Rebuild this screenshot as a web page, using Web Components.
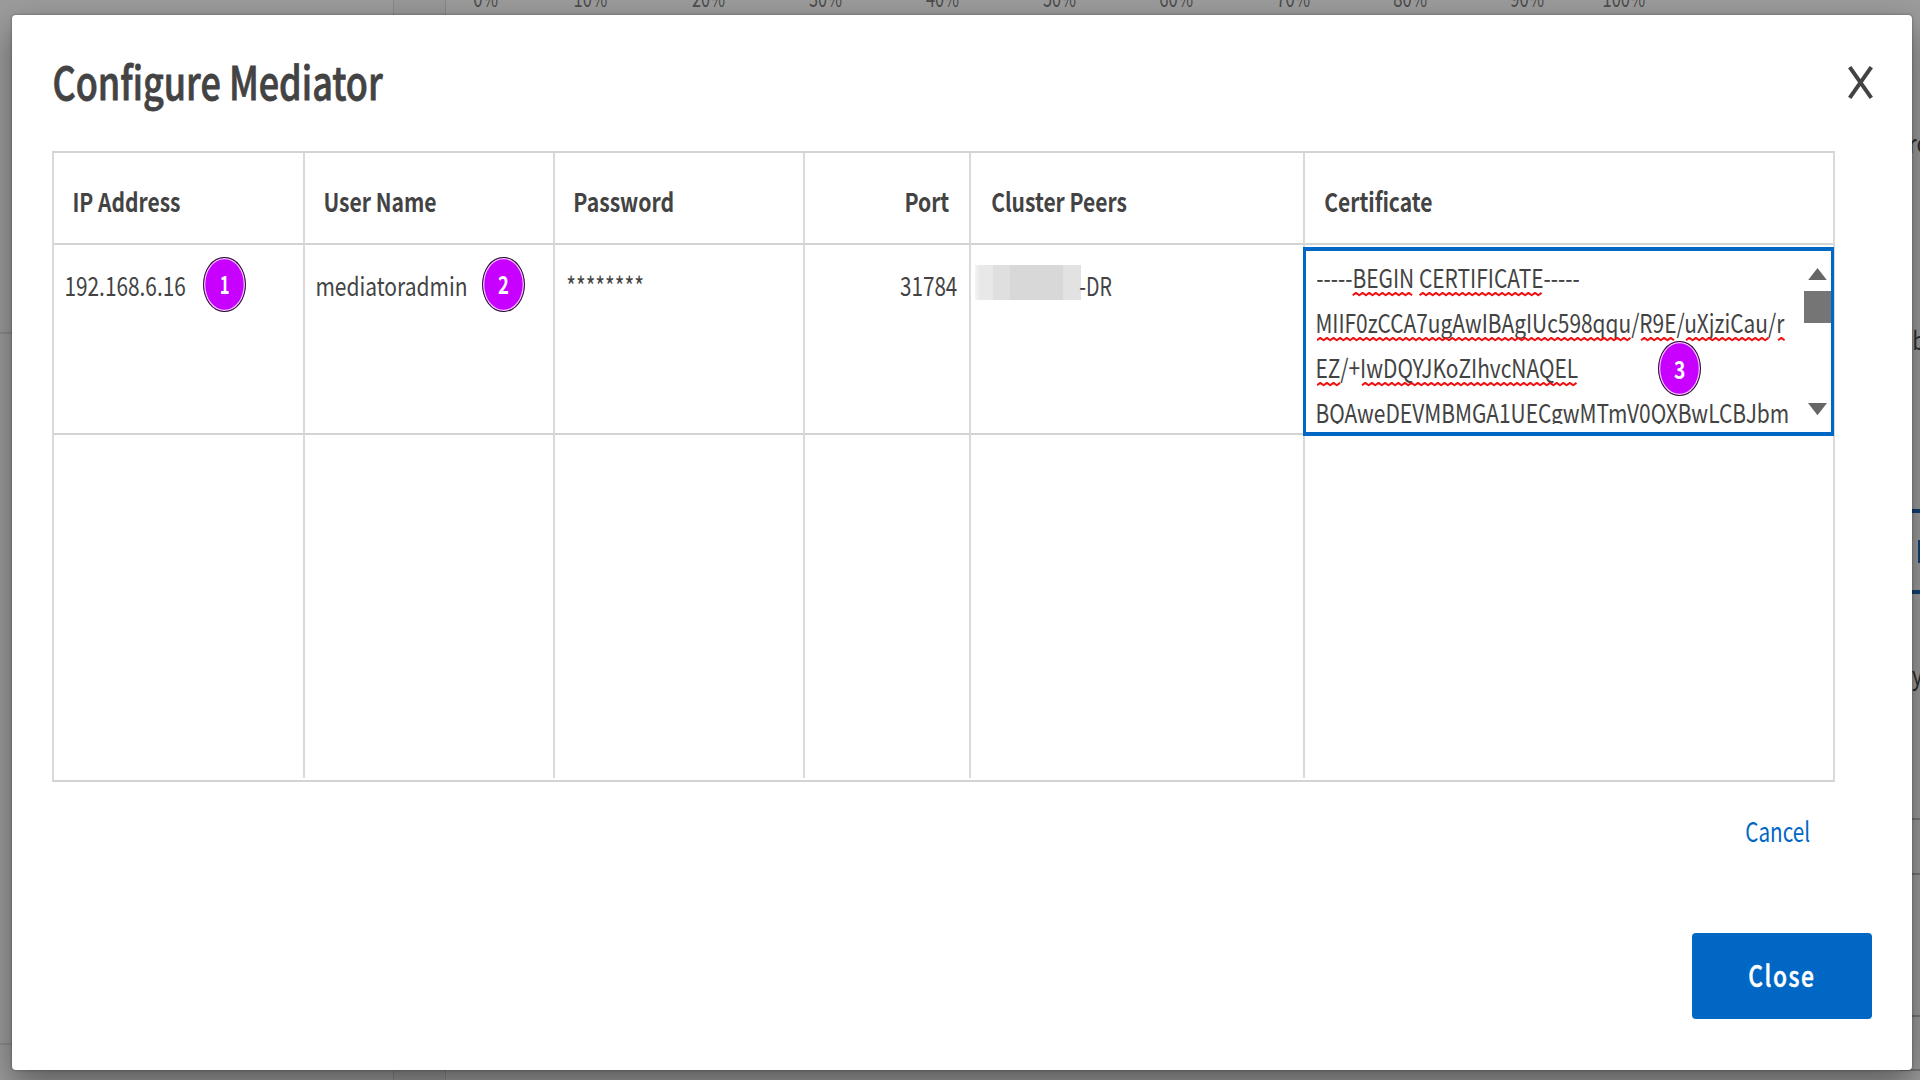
<!DOCTYPE html>
<html lang="en">
<head>
<meta charset="utf-8">
<title>Configure Mediator</title>
<style>
html,body{margin:0;height:100%;overflow:hidden}
body{background:#9c9c9c;font-family:"Noto Sans CJK SC","Noto Sans",sans-serif;color:#434343}
</style>
</head>
<body>
<mediator-page></mediator-page>
<script>
const FONT = '"Noto Sans CJK SC","Noto Sans",sans-serif';
const measure = document.createElement('canvas').getContext('2d');

/* Condensed label: its text is narrowed to the width in the "w" attribute.
   "line" is the line height, "bold" adds a thin stroke for in-between weights. */
class FitText extends HTMLElement {
  connectedCallback() {
    if (this.shadowRoot) return;
    const w = +this.getAttribute('w'), size = +(this.getAttribute('size') || 26);
    const line = +(this.getAttribute('line') || 45), weight = this.getAttribute('weight') || 400;
    const spacing = +(this.getAttribute('spacing') || 0), bold = +(this.getAttribute('bold') || 0);
    measure.font = `${weight} ${size}px ${FONT}`;
    measure.letterSpacing = spacing + 'px';
    const m = measure.measureText(this.textContent);
    const ink = m.actualBoundingBoxLeft + m.actualBoundingBoxRight;
    const k = w / ink;
    this.attachShadow({mode: 'open'}).innerHTML = `<style>
      :host{display:block;flex:none;width:${w}px;height:${line}px;line-height:${line}px;font-size:${size}px;font-weight:${weight};white-space:nowrap}
      span{display:inline-block;white-space:pre;letter-spacing:${spacing}px;-webkit-text-stroke:${bold}px currentColor;transform-origin:0 0;transform:translateX(${m.actualBoundingBoxLeft * k}px) scaleX(${k})}
    </style><span><slot></slot></span>`;
  }
}

class StepBadge extends HTMLElement {
  connectedCallback() {
    this.attachShadow({mode: 'open'}).innerHTML = `<style>
      :host{display:flex;align-items:center;justify-content:center;position:absolute;z-index:2;box-sizing:border-box;width:42.5px;height:55.5px;border-radius:50%;border:1px solid #2a1230;background:#c800ff;box-shadow:inset 0 0 0 1.3px #f3c9ff;color:#fff}
    </style><fit-text w="${this.getAttribute('w')}" size="24.5" line="56" weight="700">${this.textContent}</fit-text>`;
  }
}

class DataCell extends HTMLElement {
  connectedCallback() {
    this.attachShadow({mode: 'open'}).innerHTML = `<style>
      :host{display:flex;position:relative;box-sizing:border-box;border-right:2px solid #dadada;min-width:0}
      :host([head]){padding:25px 19.8px 0 20.7px;border-bottom:2px solid #d3d3d3}
      :host([body]){padding:16.7px 11.8px 0 12.4px;border-bottom:2px solid #d3d3d3}
      :host([fill]){margin-bottom:2px}
      :host([end]){justify-content:flex-end}
      :host([last]){border-right:0}
    </style><slot></slot>`;
  }
}

class RedactedName extends HTMLElement {
  connectedCallback() {
    this.attachShadow({mode: 'open'}).innerHTML = `<style>
      :host{display:flex;flex:none;width:106px;height:35.3px}
      i{flex:none}
    </style><i style="width:18px;background:linear-gradient(90deg,#f4f4f4,#e8e8e8 5px)"></i><i style="width:17px;background:#dfdfdf"></i><i style="width:53px;background:#d8d8d8"></i><i style="width:18px;background:#e2e2e2"></i>`;
  }
}

class CertField extends HTMLElement {
  connectedCallback() {
    const rows = [
      [47, [[35.7, 97.4], [102.5, 226]]],
      [92, [[0, 314.6], [324, 360.2], [369, 452], [461, 469]]],
      [137, [[0, 24.4], [45, 262]]]
    ];
    let d = '';
    for (const [y, parts] of rows) for (const [a, b] of parts) {
      d += `M${a} ${y + 1.3}`;
      let up = true;
      for (let x = a + 3.3; x < b; x += 3.3, up = !up) d += `L${x.toFixed(1)} ${up ? y - 1.1 : y + 1.3}`;
    }
    this.attachShadow({mode: 'open'}).innerHTML = `<style>
      :host{display:flex;justify-content:space-between;position:absolute;left:-1.5px;top:2px;box-sizing:border-box;width:530.5px;height:189px;border:solid #0067c5;border-width:4px 3px;background:#fff;z-index:1}
      .text{position:relative;margin:3.2px 0 0 10.7px;height:169.8px;overflow:hidden;width:474px}
      svg.waves{position:absolute;left:0;top:-7.4px}
      .bar{display:flex;flex-direction:column;align-items:center;width:27px;height:181px}
      .thumb{width:27px;height:32px;background:#757575;margin:10.3px 0 80.7px}
      .bar svg{margin-top:16.7px;flex:none}.bar svg+.thumb+svg{margin-top:0}
      svg{display:block;flex:none}
    </style>
    <div class="text">
      <fit-text w="262">-----BEGIN CERTIFICATE-----</fit-text>
      <fit-text w="468">MIIF0zCCA7ugAwIBAgIUc598qqu/R9E/uXjziCau/r</fit-text>
      <fit-text w="261">EZ/+IwDQYJKoZIhvcNAQEL</fit-text>
      <fit-text w="470.5">BQAweDEVMBMGA1UECgwMTmV0QXBwLCBJbm</fit-text>
      <svg class="waves" width="474" height="170" fill="none" stroke="#ee1111" stroke-width="2" stroke-linejoin="round"><path d="${d}"/></svg>
    </div>
    <div class="bar">
      <svg width="19" height="12.3" viewBox="0 0 19 12.3"><path d="M9.5 0L19 12.3H0z" fill="#666"/></svg>
      <div class="thumb"></div>
      <svg width="19" height="12.3" viewBox="0 0 19 12.3"><path d="M0 0H19L9.5 12.3z" fill="#666"/></svg>
    </div>`;
  }
}

class MediatorTable extends HTMLElement {
  connectedCallback() {
    this.attachShadow({mode: 'open'}).innerHTML = `<style>
      :host{display:grid;box-sizing:border-box;width:1783.5px;height:630.5px;border:2px solid #d6d6d6;border-color:#d3d3d3 #dadada;grid-template-columns:251px 250px 250px 166.5px 333.5px 1fr;grid-template-rows:92.3px 190px 1fr}
    </style>
    <data-cell head><fit-text w="105.7" weight="700">IP Address</fit-text></data-cell>
    <data-cell head><fit-text w="110.6" weight="700">User Name</fit-text></data-cell>
    <data-cell head><fit-text w="97.7" weight="700">Password</fit-text></data-cell>
    <data-cell head end><fit-text w="43.3" weight="700">Port</fit-text></data-cell>
    <data-cell head><fit-text w="134.2" weight="700">Cluster Peers</fit-text></data-cell>
    <data-cell head last><fit-text w="106.5" weight="700">Certificate</fit-text></data-cell>
    <data-cell body><fit-text w="119.5" style="margin-left:.6px">192.168.6.16</fit-text><step-badge w="7.5" style="left:149.5px;top:11.3px">1</step-badge></data-cell>
    <data-cell body><fit-text w="149">mediatoradmin</fit-text><step-badge w="10.6" style="left:177.8px;top:11.3px">2</step-badge></data-cell>
    <data-cell body><fit-text w="76" style="margin-top:.3px">********</fit-text></data-cell>
    <data-cell body end><fit-text w="57">31784</fit-text></data-cell>
    <data-cell body><redacted-name style="margin:2.8px 0 0 -8px"></redacted-name><fit-text w="31.5" style="margin-left:-1px">-DR</fit-text></data-cell>
    <data-cell body last><cert-field></cert-field><step-badge w="11" style="left:353.5px;top:95.7px">3</step-badge></data-cell>
    <data-cell fill></data-cell><data-cell fill></data-cell><data-cell fill></data-cell><data-cell fill></data-cell><data-cell fill></data-cell><data-cell fill last></data-cell>`;
  }
}

class MediatorDialog extends HTMLElement {
  connectedCallback() {
    this.attachShadow({mode: 'open'}).innerHTML = `<style>
      :host{display:flex;flex-direction:column;position:absolute;left:11.5px;top:15px;box-sizing:border-box;width:1900px;height:1055px;padding:0 40px;background:#fff;border-radius:4px;box-shadow:0 14px 34px rgba(0,0,0,.42),0 0 3px rgba(0,0,0,.35)}
      header{display:flex;justify-content:space-between;height:136px}
      header fit-text{margin:19.5px 0 0 2px}
      header svg{margin:51.2px -1.3px 0 0}
      .cancel{align-self:flex-end;margin:26.8px 62.5px 0 0;color:#0067c5}
      button{all:unset;display:flex;justify-content:center;align-self:flex-end;width:180px;height:86px;margin-top:79.7px;border-radius:4px;background:#0067c5;color:#fff}
      button fit-text{margin-top:-1.8px}
    </style>
    <header><fit-text w="329" size="45.5" line="90" weight="500" bold=".8">Configure Mediator</fit-text>
    <svg width="25" height="33" viewBox="0 0 25 33" fill="none" stroke="#434343" stroke-width="4"><path d="M1.7 1.2L23.3 31.8M23.3 1.2L1.7 31.8"/></svg></header>
    <mediator-table></mediator-table>
    <fit-text class="cancel" w="63.5" size="27">Cancel</fit-text>
    <button><fit-text w="64.5" size="29" line="86" weight="500" spacing="2" bold=".5">Close</fit-text></button>`;
  }
}

class DimmedApp extends HTMLElement {
  connectedCallback() {
    const ticks = [[0, 28, 24], [10, 77, 32], [20, 84.5, 33], [30, 84, 33], [40, 84, 33], [50, 84, 33], [60, 84, 33], [70, 84, 33], [80, 84.5, 33], [90, 84, 33], [100, 59.5, 41]];
    this.attachShadow({mode: 'open'}).innerHTML = `<style>
      :host{display:flex;width:1920px;height:1080px;overflow:hidden;color:#4c4c4c}
      .side{width:393px;border-right:1px solid #878787;display:flex;flex-direction:column}
      .side i{height:331.5px;border-bottom:2px solid #8c8c8c}.side i+i{height:709.5px}
      .gutter{width:51px;border-right:1px solid #878787;background:#989898}
      .main{display:flex;flex-direction:column;flex:1;min-width:0}
      .axis{display:flex;height:15px}
      .axis fit-text{margin-top:-24.6px}
      .rail{display:flex;flex-direction:column;width:20px;margin-left:1454px;color:#2b2b2b}
      .rail fit-text,.rail div,.rail i{flex:none}
      .pick{display:flex;align-items:center;justify-content:flex-end;box-sizing:border-box;height:85px;border:solid #0f4076;border-width:4px 0}
      .pick i{width:2px;height:23px;background:#0f4076}
      .rule{height:2px;background:#777}
    </style>
    <div class="side"><i></i><i></i></div><div class="gutter"></div>
    <div class="main"><div class="axis">${ticks.map(([n, g, w]) => `<fit-text size="23" line="44" w="${w}" style="margin-left:${g}px">${n}%</fit-text>`).join('')}</div>
      <div class="rail">
        <fit-text w="19" style="margin:104px 0 0 10px">ro</fit-text>
        <fit-text w="10" style="margin:152px 0 0 13.5px">b</fit-text>
        <div class="pick" style="margin-top:148px"><i></i></div>
        <fit-text w="11" style="margin:57px 0 0 12px">y</fit-text>
        <i class="rule" style="margin-top:122px"></i>
        <i class="rule" style="margin-top:52.5px"></i>
        <i class="rule" style="margin-top:140px"></i>
        <i class="rule" style="margin-top:52.5px"></i>
      </div></div>`;
  }
}

class MediatorPage extends HTMLElement {
  connectedCallback() {
    this.attachShadow({mode: 'open'}).innerHTML = `<style>:host{display:block;position:relative;width:1920px;height:1080px;overflow:hidden}</style>
    <dimmed-app></dimmed-app><mediator-dialog></mediator-dialog>`;
  }
}

for (const [name, cls] of [['fit-text', FitText], ['step-badge', StepBadge], ['data-cell', DataCell], ['redacted-name', RedactedName], ['cert-field', CertField], ['mediator-table', MediatorTable], ['mediator-dialog', MediatorDialog], ['dimmed-app', DimmedApp], ['mediator-page', MediatorPage]]) customElements.define(name, cls);
</script>
</body>
</html>
